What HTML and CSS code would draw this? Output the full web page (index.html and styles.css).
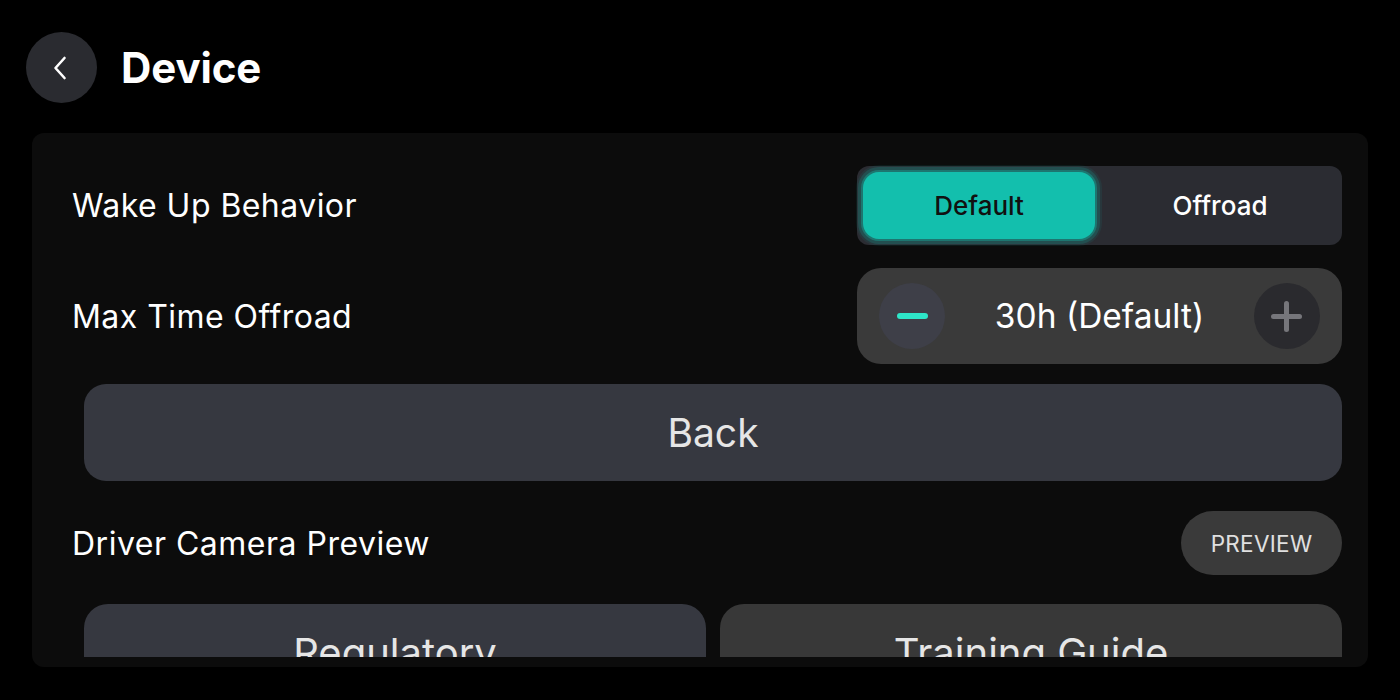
FILE: index.html
```html
<!DOCTYPE html>
<html>
<head>
<meta charset="utf-8">
<link rel="stylesheet" href="styles.css">
</head>
<body>
<div class="app">
  <header class="header">
    <div class="back-circle">
      <svg width="24" height="24" viewBox="0 0 24 24"><path d="M15.5 2 L6.5 12 L15.5 22" fill="none" stroke="#fff" stroke-width="2.6" stroke-linecap="round" stroke-linejoin="round"/></svg>
    </div>
    <h1 class="title">Device</h1>
  </header>
  <main class="panel">
    <div class="scroll">
      <div class="row row-seg">
        <span class="label">Wake Up Behavior</span>
        <div class="segmented">
          <div class="seg seg-active">Default</div>
          <div class="seg seg-off">Offroad</div>
        </div>
      </div>
      <div class="row row-step">
        <span class="label">Max Time Offroad</span>
        <div class="stepper">
          <div class="step-btn step-minus"><span class="minus-bar"></span></div>
          <span class="step-value">30h (Default)</span>
          <div class="step-btn step-plus"><span class="plus-h"></span><span class="plus-v"></span></div>
        </div>
      </div>
      <div class="wide-btn">Back</div>
      <div class="row row-preview">
        <span class="label label-narrow">Driver Camera Preview</span>
        <div class="pill">PREVIEW</div>
      </div>
      <div class="grid-btns">
        <div class="tile tile-blue">Regulatory</div>
        <div class="tile tile-grey">Training Guide</div>
      </div>
    </div>
  </main>
</div>
</body>
</html>
```
FILE: styles.css
```css
* { box-sizing: border-box; }
html, body { margin: 0; padding: 0; background: #000; }
body { font-family: Inter, "Noto Sans", sans-serif; color: #fff; width: 1400px; height: 700px; overflow: hidden; }
.app { padding: 32px 32px 0 32px; }
.header { display: flex; align-items: center; height: 71px; margin-left: -6px; }
.back-circle { width: 71px; height: 71px; border-radius: 50%; background: #2a2b30; display: flex; align-items: center; justify-content: center; }
.back-circle svg { margin-left: -2px; }
.title { margin: 0 0 0 24px; font-size: 42px; font-weight: 700; letter-spacing: -0.1px; line-height: 1; }
.panel { margin-top: 30px; width: 1336px; height: 534px; background: #0c0c0c; border-radius: 12px; padding-bottom: 10px; }
.scroll { height: 524px; overflow: hidden; padding: 33px 26px 0 40px; }
.row { display: flex; align-items: center; justify-content: space-between; }
.label { font-size: 32px; font-weight: 400; letter-spacing: 0.45px; }
.row-seg { height: 79px; }
.segmented { width: 485px; height: 79px; background: #2b2c32; border-radius: 12px; padding: 6px; display: flex; }
.seg { flex: 1; display: flex; align-items: center; justify-content: center; font-size: 26px; font-weight: 500; color: #fff; border-radius: 16px; }
.seg-off { padding-left: 9px; }
.seg-active { flex: 0 0 232px; background: #13bfad; color: #111; box-shadow: 0 0 0 2px rgba(19,191,173,0.35), 0 0 0 5px rgba(19,191,173,0.18), 0 0 0 7px rgba(19,191,173,0.08); }
.row-step { height: 96px; margin-top: 23px; }
.stepper { width: 485px; height: 96px; background: #3a3a3a; border-radius: 24px; padding: 0 22px; display: flex; align-items: center; justify-content: space-between; }
.step-btn { width: 66px; height: 66px; border-radius: 50%; position: relative; display: flex; align-items: center; justify-content: center; }
.step-minus { background: #3e3f48; }
.step-plus { background: #2a2a2e; }
.minus-bar { width: 31px; height: 6px; border-radius: 3px; background: #2ee6c9; }
.plus-h { position: absolute; width: 31px; height: 5px; border-radius: 3px; background: #76767b; left: 17.5px; top: 30.5px; }
.plus-v { position: absolute; width: 5px; height: 31px; border-radius: 3px; background: #76767b; left: 30.5px; top: 17.5px; }
.step-value { font-size: 33.5px; font-weight: 400; }
.wide-btn { margin: 20px 0 0 12px; height: 97px; background: #363840; border-radius: 22px; display: flex; align-items: center; justify-content: center; font-size: 39px; color: #e6e6e6; }
.row-preview { height: 64px; margin-top: 30px; }
.label-narrow { letter-spacing: 0.5px; }
.pill { width: 161px; height: 64px; border-radius: 32px; background: #3a3a3a; display: flex; align-items: center; justify-content: center; font-size: 22.5px; letter-spacing: 0.3px; color: #e0e0e0; }
.grid-btns { margin: 29px 0 0 12px; display: grid; grid-template-columns: 1fr 1fr; gap: 14px; }
.tile { height: 97px; border-radius: 24px; display: flex; align-items: center; justify-content: center; font-size: 40px; color: #e6e6e6; }
.tile-blue { background: #363840; }
.tile-grey { background: #383838; }
```
